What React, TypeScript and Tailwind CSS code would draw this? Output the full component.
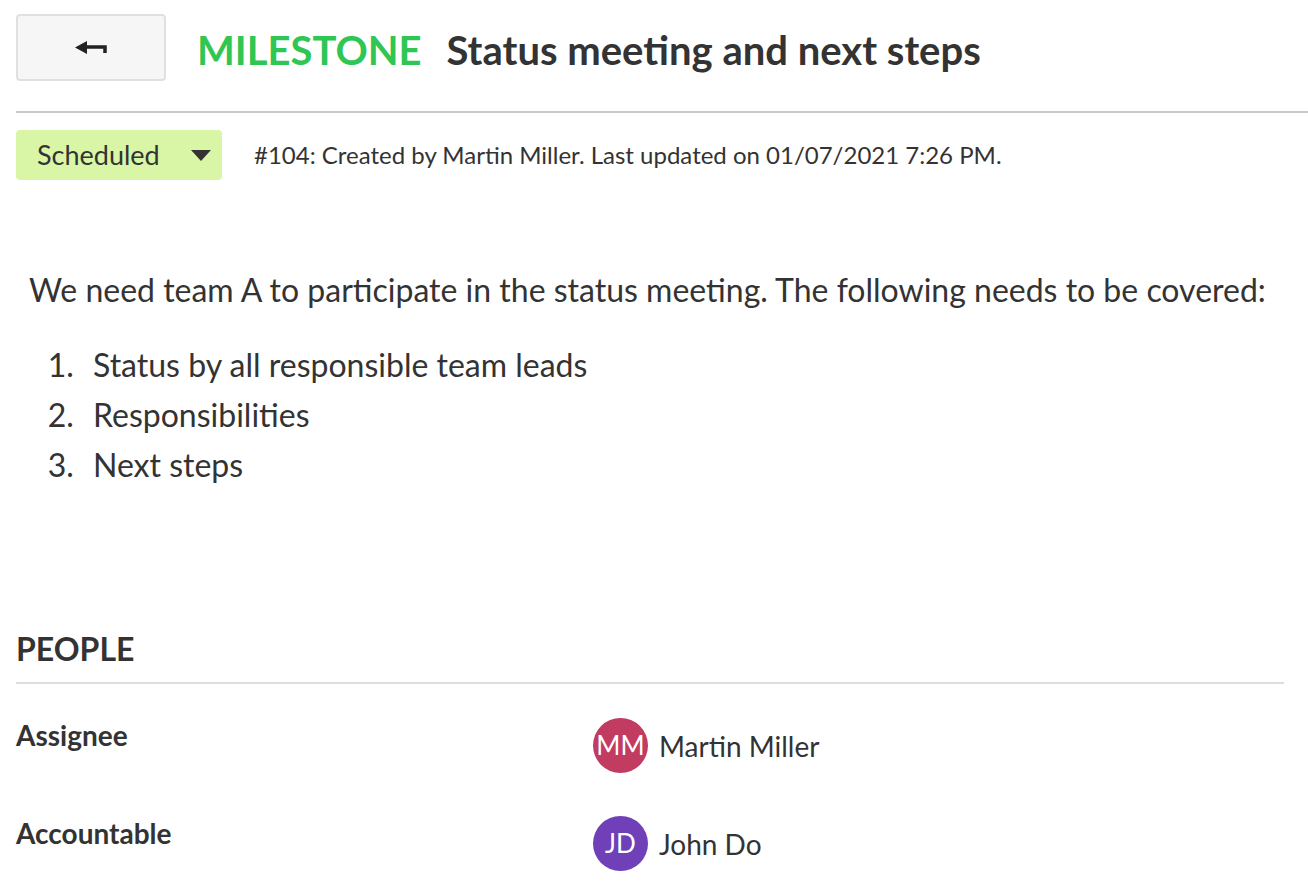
export default function App() {
  const people = [
    { role: "Assignee", initials: "MM", name: "Martin Miller", color: "bg-[#c23c62]" },
    { role: "Accountable", initials: "JD", name: "John Do", color: "bg-[#6f40b8]" },
  ];

  return (
    <div className="min-h-screen bg-white pl-4 text-[#333] font-['Lato',sans-serif]">
      {/* Header */}
      <div className="flex items-center pt-[14px]">
        <button className="flex h-[67px] w-[150px] items-center justify-center rounded border-2 border-[#e0e0e0] bg-[#f6f6f6]">
          <svg width="32" height="14" viewBox="0 0 32 14">
            <polygon points="0,6.5 12,0 12,13" fill="#222" />
            <path d="M11 6 H30 V12" stroke="#222" strokeWidth="3.5" fill="none" />
          </svg>
        </button>
        <h1 className="mt-[4px] ml-[31px] flex items-baseline gap-[25px] text-[40px] font-bold leading-none">
          <span className="text-[#2fc653]">MILESTONE</span>
          <span className="text-[#333]">Status meeting and next steps</span>
        </h1>
      </div>

      <div className="mt-[30px] h-[2px] bg-[#cacaca]" />

      {/* Status row */}
      <div className="mt-[17px] flex items-center">
        <div className="flex h-[50px] w-[206px] items-center justify-between rounded bg-[#d9f6a6] pl-[21px] pr-[11px]">
          <span className="text-[27px]">Scheduled</span>
          <svg width="20" height="11" viewBox="0 0 20 11">
            <polygon points="0,0 20,0 10,11" fill="#333" />
          </svg>
        </div>
        <span className="ml-[32px] text-[24px]">
          #104: Created by Martin Miller. Last updated on 01/07/2021 7:26 PM.
        </span>
      </div>

      {/* Description */}
      <div className="mt-[85px] pl-[13px] text-[32px] leading-[50px]">
        <p>We need team A to participate in the status meeting. The following needs to be covered:</p>
        <ol className="mt-[25px] list-decimal pl-[53px]">
          <li className="pl-[11px]">Status by all responsible team leads</li>
          <li className="pl-[11px]">Responsibilities</li>
          <li className="pl-[11px]">Next steps</li>
        </ol>
      </div>

      {/* People */}
      <div className="mt-[143px] pr-[24px]">
        <h2 className="text-[32px] font-bold leading-none">PEOPLE</h2>
        <div className="mt-[17px] h-[2px] bg-[#dddddd]" />
        <div className="mt-[34px] flex flex-col gap-[43px]">
          {people.map((p) => (
            <div key={p.role} className="flex items-start">
              <div className="w-[577px] pt-[3px] text-[28px] font-bold leading-none">{p.role}</div>
              <div className="flex items-center gap-[11px]">
                <div
                  className={`flex h-[55px] w-[55px] items-center justify-center rounded-full text-[26px] text-white ${p.color}`}
                >
                  {p.initials}
                </div>
                <span className="text-[28px]">{p.name}</span>
              </div>
            </div>
          ))}
        </div>
      </div>
    </div>
  );
}
